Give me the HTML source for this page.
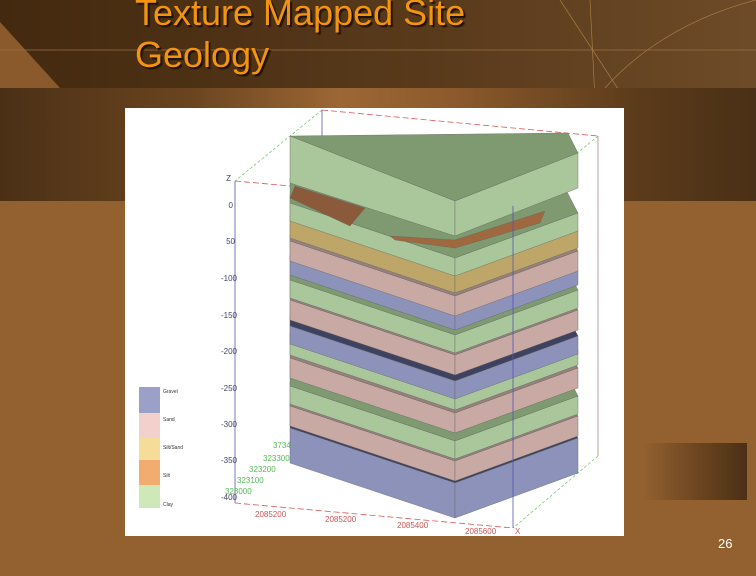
<!DOCTYPE html><html><head><style>
body{margin:0;width:756px;height:576px;overflow:hidden;background:#93612f;position:relative;font-family:"Liberation Sans",sans-serif}
.top{position:absolute;left:0;top:0;width:756px;height:88px;background:linear-gradient(90deg,#43290f,#5a3b1c 60%,#6e4b28)}
.band{position:absolute;left:0;top:88px;width:756px;height:113px;background:linear-gradient(90deg,#4b3016 0%,#6a441f 25%,#9c6734 45%,#8c5a2c 60%,#5a3a1a 85%,#4a3016)}
.box{position:absolute;left:643px;top:443px;width:104px;height:57px;background:linear-gradient(90deg,#93612f,#6a4420 55%,#4a3016)}
h1{position:absolute;left:135px;top:-8px;margin:0;font-weight:normal;font-size:36px;line-height:42px;color:#f2940f;text-shadow:2px 2px 1px #1e1206}
.pg{position:absolute;left:718px;top:536px;color:#fff;font-size:13px}
.img{position:absolute;left:125px;top:108px;width:499px;height:428px;background:#fff}
</style></head><body>
<div class="top"></div>
<svg style="position:absolute;left:0;top:0" width="756" height="200"><polygon points="0,22 0,88 60,88" fill="#8a5a2c"/>
<line x1="0" y1="50" x2="756" y2="50" stroke="#9a6f43" stroke-width="0.7"/>
<path d="M560,0 L756,300 M590,0 L600,200 M756,0 C680,20 620,60 580,120" stroke="#a87a48" fill="none" stroke-width="0.7"/></svg>
<div class="band"></div>
<div class="box"></div>
<h1>Texture Mapped Site<br>Geology</h1>
<div class="img"><svg width="499" height="428" viewBox="0 0 499 428">
<g fill="none" stroke-width="0.8">
<line x1="197" y1="2" x2="473" y2="28" stroke="#d55" stroke-dasharray="6,3"/>
<line x1="110" y1="73" x2="388" y2="98" stroke="#d55" stroke-dasharray="6,3"/>
<line x1="197" y1="2" x2="110" y2="73" stroke="#7c7" stroke-dasharray="3,2"/>
<line x1="473" y1="28" x2="388" y2="98" stroke="#7c7" stroke-dasharray="3,2"/>
<line x1="473" y1="348" x2="388" y2="420" stroke="#7c7" stroke-dasharray="3,2"/>
<line x1="110" y1="395" x2="388" y2="420" stroke="#d55" stroke-dasharray="6,3"/>
<line x1="197" y1="2" x2="197" y2="28" stroke="#55a"/>
<line x1="473" y1="28" x2="473" y2="348" stroke="#a88"/>
<line x1="110" y1="73" x2="110" y2="395" stroke="#55a"/>
</g>
<g stroke="#666" stroke-width="0.4">
<polygon points="165,295 440,305 453,330 330,375 165,320" fill="#3e4260"/>
<polygon points="165,320 330,375 330,410 165,355" fill="#8c92ba"/><polygon points="330,375 453,330 453,365 330,410" fill="#8c92ba"/>
<polygon points="165,273 440,283 453,308 330,353 165,298" fill="#98807a"/>
<polygon points="165,298 330,353 330,373 165,318" fill="#c9a9a3"/><polygon points="330,353 453,308 453,328 330,373" fill="#c9a9a3"/>
<polygon points="165,253 440,263 453,288 330,333 165,278" fill="#7f9a70"/>
<polygon points="165,278 330,333 330,351 165,296" fill="#a9c79a"/><polygon points="330,333 453,288 453,306 330,351" fill="#a9c79a"/>
<polygon points="165,225 440,235 453,260 330,305 165,250" fill="#98807a"/>
<polygon points="165,250 330,305 330,325 165,270" fill="#c9a9a3"/><polygon points="330,305 453,260 453,280 330,325" fill="#c9a9a3"/>
<polygon points="165,207 440,217 453,242 330,287 165,232" fill="#7f9a70"/>
<polygon points="165,232 330,287 330,302 165,247" fill="#a9c79a"/><polygon points="330,287 453,242 453,257 330,302" fill="#a9c79a"/>
<polygon points="165,193 440,203 453,228 330,273 165,218" fill="#3e4260"/>
<polygon points="165,218 330,273 330,291 165,236" fill="#8c92ba"/><polygon points="330,273 453,228 453,246 330,291" fill="#8c92ba"/>
<polygon points="165,167 440,177 453,202 330,247 165,192" fill="#98807a"/>
<polygon points="165,192 330,247 330,267 165,212" fill="#c9a9a3"/><polygon points="330,247 453,202 453,222 330,267" fill="#c9a9a3"/>
<polygon points="165,147 440,157 453,182 330,227 165,172" fill="#7f9a70"/>
<polygon points="165,172 330,227 330,245 165,190" fill="#a9c79a"/><polygon points="330,227 453,182 453,200 330,245" fill="#a9c79a"/>
<polygon points="165,127 440,137 453,162 330,207 165,152" fill="#3e4260"/>
<polygon points="165,152 330,207 330,222 165,167" fill="#8c92ba"/><polygon points="330,207 453,162 453,177 330,222" fill="#8c92ba"/>
<polygon points="165,108 440,118 453,143 330,188 165,133" fill="#98807a"/>
<polygon points="165,133 330,188 330,208 165,153" fill="#c9a9a3"/><polygon points="330,188 453,143 453,163 330,208" fill="#c9a9a3"/>
<polygon points="165,87 440,97 453,122 330,167 165,112" fill="#8f8050"/>
<polygon points="165,112 330,167 330,185 165,130" fill="#bda668"/><polygon points="330,167 453,122 453,140 330,185" fill="#bda668"/>
<polygon points="165,70 440,80 453,105 330,150 165,95" fill="#7f9a70"/>
<polygon points="165,95 330,150 330,168 165,113" fill="#a9c79a"/><polygon points="330,150 453,105 453,123 330,168" fill="#a9c79a"/>
<polygon points="170,78 240,100 225,118 165,90" fill="#8a5a3a"/><polygon points="265,128 330,132 420,103 415,115 330,140 270,132" fill="#a0683e"/>
<polygon points="165,28 443,25 453,45 330,93" fill="#7f9a70"/>
<polygon points="165,28 330,93 330,128 165,75" fill="#a9c79a"/><polygon points="330,93 453,45 453,80 330,128" fill="#a9c79a"/>
</g>
<line x1="388" y1="98" x2="388" y2="420" stroke="#55a" stroke-width="0.8"/>
<g font-size="8" fill="#446" text-anchor="end">
<text x="106" y="73">Z</text>
<text x="108" y="100">0</text><text x="110" y="136">50</text><text x="112" y="173">-100</text><text x="112" y="210">-150</text><text x="112" y="246">-200</text><text x="112" y="283">-250</text><text x="112" y="319">-300</text><text x="112" y="355">-350</text><text x="112" y="392">-400</text></g>
<g font-size="8" fill="#c55">
<text x="130" y="409">2085200</text><text x="200" y="414">2085200</text><text x="272" y="420">2085400</text><text x="340" y="426">2085600</text><text x="390" y="426">X</text></g>
<g font-size="8" fill="#5b5"><text x="148" y="340">3734</text><text x="138" y="353">323300</text><text x="124" y="364">323200</text><text x="112" y="375">323100</text><text x="100" y="386">323000</text></g>
<g font-size="5" fill="#333"><rect x="14" y="279" width="21" height="26" fill="#9aa0c8"/><rect x="14" y="305" width="21" height="25" fill="#f2d0cc"/><rect x="14" y="330" width="21" height="22" fill="#f5dc98"/><rect x="14" y="352" width="21" height="25" fill="#f2ac70"/><rect x="14" y="377" width="21" height="23" fill="#cfe8b8"/>
<text x="38" y="285">Gravel</text><text x="38" y="313">Sand</text><text x="38" y="341">Silt/Sand</text><text x="38" y="369">Silt</text><text x="38" y="398">Clay</text></g>
</svg></div>
<div class="pg">26</div>
</body></html>
